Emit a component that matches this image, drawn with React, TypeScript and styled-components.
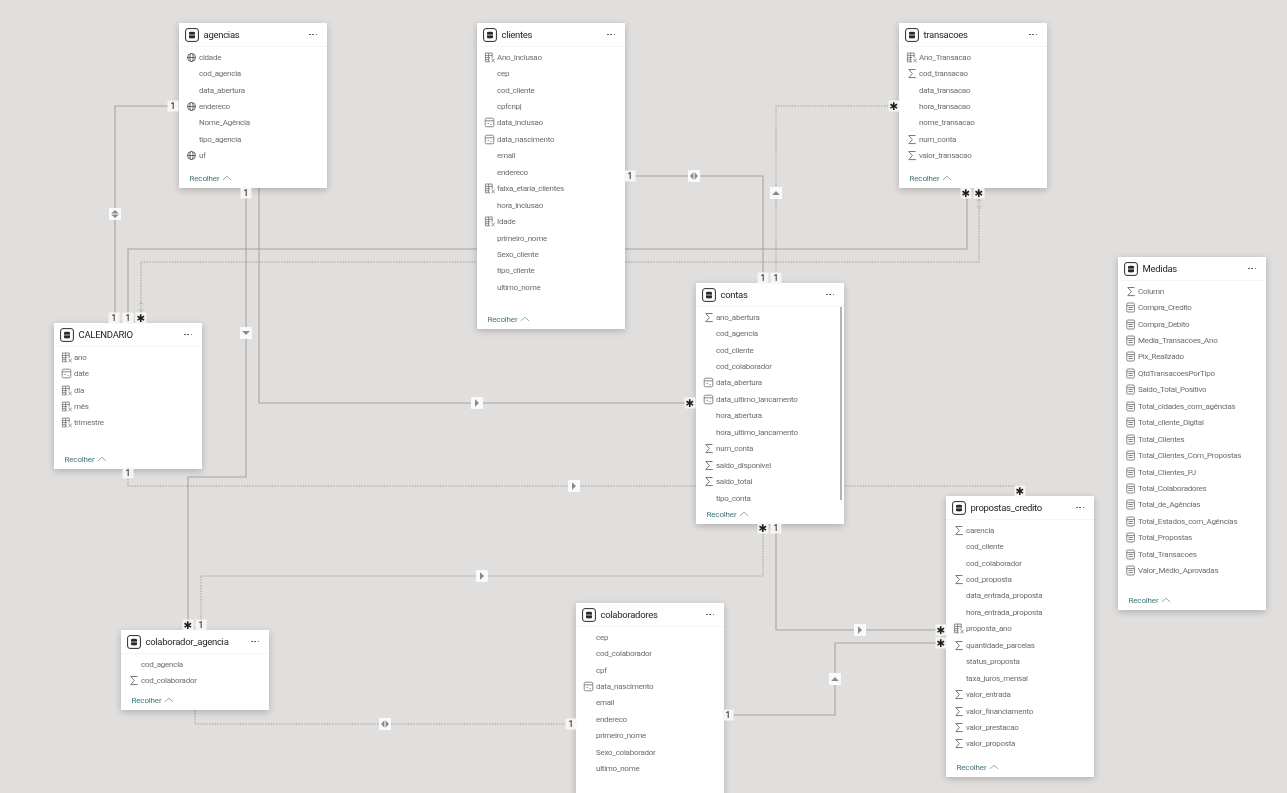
import React from 'react';
import styled, { createGlobalStyle } from 'styled-components';

const GlobalStyle = createGlobalStyle`
  html, body {
    margin: 0;
    padding: 0;
    width: 100%;
    height: 100%;
    overflow: hidden;
    background: #e0dfdd;
  }
`;

const Canvas = styled.div`
  position: relative;
  width: 1287px;
  height: 793px;
  overflow: hidden;
  background: #e0dfdd;
  font-family: Roboto, 'Noto Sans', 'Liberation Sans', sans-serif;
  filter: blur(0.25px);
`;

const Wires = styled.svg`
  position: absolute;
  left: 0;
  top: 0;
`;

const Card = styled.section<{ $x: number; $y: number; $h: number }>`
  position: absolute;
  left: ${(p) => p.$x}px;
  top: ${(p) => p.$y}px;
  width: 148px;
  height: ${(p) => p.$h}px;
  display: flex;
  flex-direction: column;
  box-sizing: border-box;
  background: #fff;
  box-shadow: 0 2px 7px rgba(0, 0, 0, 0.22);
`;

const CardHeader = styled.header`
  display: flex;
  align-items: center;
  flex: none;
  height: 23px;
  padding: 0 10px 0 6px;
  border-bottom: 1px solid #f5f4f3;
  color: #252423;
`;

const Title = styled.span`
  flex: 1;
  margin-left: 4.5px;
  font-size: 9.5px;
  letter-spacing: -0.28px;
  white-space: nowrap;
`;

const Dots = styled.span`
  display: flex;
  gap: 1.6px;
  span {
    width: 1.5px;
    height: 1.5px;
    border-radius: 50%;
    background: #4a4947;
  }
`;

const FieldList = styled.ul`
  flex: 1;
  list-style: none;
  margin: 0;
  padding: 2px 0 0;
  min-height: 0;
`;

const Field = styled.li`
  display: flex;
  align-items: center;
  height: 16.45px;
  padding-left: 6.5px;
  color: #6f6d6b;
  font-size: 8px;
  letter-spacing: -0.27px;
  white-space: nowrap;
`;

const IconSlot = styled.span`
  display: flex;
  align-items: center;
  justify-content: center;
  flex: none;
  width: 12px;
  height: 12px;
  margin-right: 1.5px;
`;

const CardFooter = styled.footer`
  display: flex;
  align-items: center;
  flex: none;
  height: 20px;
  padding-left: 10.5px;
  color: #3f7679;
  font-size: 8px;
  letter-spacing: -0.15px;
  svg {
    margin-left: 2px;
  }
`;

const Scrollbar = styled.div`
  position: absolute;
  right: 2px;
  top: 24px;
  width: 2.5px;
  height: 193px;
  background: #b4b3b2;
`;

const Marker = styled.div<{ $x: number; $y: number }>`
  position: absolute;
  left: ${(p) => p.$x}px;
  top: ${(p) => p.$y}px;
  width: 11px;
  height: 11px;
  transform: translate(-50%, -50%);
  display: flex;
  align-items: center;
  justify-content: center;
  background: #f6f5f4;
  color: #3a3938;
  font-size: 8.5px;
  font-weight: 500;
  line-height: 1;
`;

const Star = styled.span`
  font-family: 'DejaVu Sans', sans-serif;
  font-size: 10.5px;
  color: #1f1e1d;
`;

const ArrowBox = styled.div<{ $x: number; $y: number }>`
  position: absolute;
  left: ${(p) => p.$x}px;
  top: ${(p) => p.$y}px;
  width: 12px;
  height: 12px;
  transform: translate(-50%, -50%);
  display: flex;
  align-items: center;
  justify-content: center;
  background: #fbfafa;
`;

type IconKind = 'sigma' | 'globe' | 'cal' | 'calc' | 'measure';
type Row = [string, IconKind?];

const grey = '#7b7974';

function FieldIcon({ kind }: { kind: IconKind }) {
  if (kind === 'sigma') {
    return (
      <svg width="10" height="11" viewBox="0 0 10 11" fill="none" stroke="#6b6a68" strokeWidth="0.9">
        <path d="M8.5 1.5H1.8L5.4 5.6 1.8 9.6H8.8" />
      </svg>
    );
  }
  if (kind === 'globe') {
    return (
      <svg width="11" height="11" viewBox="0 0 11 11" fill="none" stroke="#55534f" strokeWidth="0.9">
        <circle cx="5.5" cy="5.5" r="4" />
        <ellipse cx="5.5" cy="5.5" rx="1.7" ry="4" />
        <path d="M1.5 5.5H9.5" />
      </svg>
    );
  }
  if (kind === 'cal') {
    return (
      <svg width="11" height="11" viewBox="0 0 11 11" fill="none" stroke={grey} strokeWidth="0.9">
        <rect x="1.2" y="1.2" width="8.6" height="8.6" rx="1.4" />
        <path d="M1.2 3.8H9.8M3.5 6.4H5M6.3 7.6H7.6" />
      </svg>
    );
  }
  if (kind === 'measure') {
    return (
      <svg width="11" height="11" viewBox="0 0 11 11" fill="none" stroke={grey} strokeWidth="0.9">
        <rect x="1.8" y="1" width="7.6" height="9" rx="1.2" />
        <path d="M1.8 3.6H9.4M3.4 5.5H7.8M3.4 7.5H7.8" />
      </svg>
    );
  }
  return (
    <svg width="12" height="11" viewBox="0 0 12 11" fill="none" stroke={grey} strokeWidth="0.85">
      <path d="M8.2 6V1H1.4V9.8H6" />
      <path d="M1.4 3.4H8.2M1.4 5.6H6M1.4 7.7H5.4M4.6 1V9.8" />
      <path d="M7.4 6.8L10.8 10.2M10.8 6.8L7.4 10.2" />
    </svg>
  );
}

function TableIcon() {
  return (
    <svg width="14" height="14" viewBox="0 0 14 14" fill="none">
      <rect x="0.6" y="0.6" width="12.8" height="12.8" rx="2.4" stroke="#2b2a29" strokeWidth="1" fill="#fff" />
      <path d="M4 4.6C4 3.4 10 3.4 10 4.6V9.6C10 10.8 4 10.8 4 9.6Z" fill="#2b2a29" />
      <path d="M4 7H10" stroke="#fff" strokeWidth="0.7" />
    </svg>
  );
}

function Chevron() {
  return (
    <svg width="10" height="6" viewBox="0 0 10 6" fill="none" stroke="#7f9394" strokeWidth="0.8">
      <path d="M0.8 5L5 1.2 9.2 5" />
    </svg>
  );
}

type TableData = { name: string; x: number; y: number; h: number; rows: Row[]; scroll?: boolean };

const plain = (...names: string[]): Row[] => names.map((n) => [n]);

const tables: TableData[] = [
  {
    name: 'agencias',
    x: 179,
    y: 23,
    h: 165,
    rows: [
      ['cidade', 'globe'],
      ['cod_agencia'],
      ['data_abertura'],
      ['endereco', 'globe'],
      ['Nome_Agência'],
      ['tipo_agencia'],
      ['uf', 'globe'],
    ],
  },
  {
    name: 'clientes',
    x: 477,
    y: 23,
    h: 306,
    rows: [
      ['Ano_Inclusao', 'calc'],
      ['cep'],
      ['cod_cliente'],
      ['cpfcnpj'],
      ['data_inclusao', 'cal'],
      ['data_nascimento', 'cal'],
      ['email'],
      ['endereco'],
      ['faixa_etaria_clientes', 'calc'],
      ['hora_inclusao'],
      ['Idade', 'calc'],
      ['primeiro_nome'],
      ['Sexo_cliente'],
      ['tipo_cliente'],
      ['ultimo_nome'],
    ],
  },
  {
    name: 'transacoes',
    x: 899,
    y: 23,
    h: 165,
    rows: [
      ['Ano_Transacao', 'calc'],
      ['cod_transacao', 'sigma'],
      ['data_transacao'],
      ['hora_transacao'],
      ['nome_transacao'],
      ['num_conta', 'sigma'],
      ['valor_transacao', 'sigma'],
    ],
  },
  {
    name: 'contas',
    x: 696,
    y: 283,
    h: 241,
    scroll: true,
    rows: [
      ['ano_abertura', 'sigma'],
      ['cod_agencia'],
      ['cod_cliente'],
      ['cod_colaborador'],
      ['data_abertura', 'cal'],
      ['data_ultimo_lancamento', 'cal'],
      ['hora_abertura'],
      ['hora_ultimo_lancamento'],
      ['num_conta', 'sigma'],
      ['saldo_disponivel', 'sigma'],
      ['saldo_total', 'sigma'],
      ['tipo_conta'],
    ],
  },
  {
    name: 'CALENDARIO',
    x: 54,
    y: 323,
    h: 146,
    rows: [
      ['ano', 'calc'],
      ['date', 'cal'],
      ['dia', 'calc'],
      ['mês', 'calc'],
      ['trimestre', 'calc'],
    ],
  },
  {
    name: 'colaborador_agencia',
    x: 121,
    y: 630,
    h: 80,
    rows: [['cod_agencia'], ['cod_colaborador', 'sigma']],
  },
  {
    name: 'colaboradores',
    x: 576,
    y: 603,
    h: 230,
    rows: [
      ['cep'],
      ['cod_colaborador'],
      ['cpf'],
      ['data_nascimento', 'cal'],
      ['email'],
      ['endereco'],
      ['primeiro_nome'],
      ['Sexo_colaborador'],
      ['ultimo_nome'],
    ],
  },
  {
    name: 'propostas_credito',
    x: 946,
    y: 496,
    h: 281,
    rows: [
      ['carencia', 'sigma'],
      ['cod_cliente'],
      ['cod_colaborador'],
      ['cod_proposta', 'sigma'],
      ['data_entrada_proposta'],
      ['hora_entrada_proposta'],
      ['proposta_ano', 'calc'],
      ['quantidade_parcelas', 'sigma'],
      ['status_proposta'],
      ['taxa_juros_mensal'],
      ['valor_entrada', 'sigma'],
      ['valor_financiamento', 'sigma'],
      ['valor_prestacao', 'sigma'],
      ['valor_proposta', 'sigma'],
    ],
  },
  {
    name: 'Medidas',
    x: 1118,
    y: 257,
    h: 353,
    rows: [
      ['Column', 'sigma'],
      ...plain(
        'Compra_Credito',
        'Compra_Debito',
        'Media_Transacoes_Ano',
        'Pix_Realizado',
        'QtdTransacoesPorTipo',
        'Saldo_Total_Positivo',
        'Total_cidades_com_agências',
        'Total_cliente_Digital',
        'Total_Clientes',
        'Total_Clientes_Com_Propostas',
        'Total_Clientes_PJ',
        'Total_Colaboradores',
        'Total_de_Agências',
        'Total_Estados_com_Agências',
        'Total_Propostas',
        'Total_Transacoes',
        'Valor_Médio_Aprovadas',
      ).map(([n]): Row => [n, 'measure']),
    ],
  },
];

const solidWires = [
  'M173 106H115V318',
  'M128 318V249H967V193',
  'M246 193V477H188V625',
  'M259 188V403H690',
  'M630 176H763V278',
  'M776 528V630H941',
  'M728 715H835V643H941',
];

const dottedWires = [
  'M141 318V262H979V193',
  'M128 473V486H1020V491',
  'M894 106H776V278',
  'M763 528V576H201V625',
  'M195 710V724H571',
];

const ones: [number, number][] = [
  [173, 106],
  [114, 318],
  [128, 318],
  [246, 193],
  [128, 473],
  [630, 176],
  [763, 278],
  [776, 278],
  [776, 528],
  [201, 625],
  [571, 724],
  [728, 715],
];

const stars: [number, number][] = [
  [141, 318],
  [966, 193],
  [979, 193],
  [894, 106],
  [690, 403],
  [1020, 491],
  [763, 528],
  [188, 625],
  [941, 630],
  [941, 643],
];

type ArrowDir = 'up' | 'down' | 'right' | 'both' | 'updown';

const arrows: [number, number, ArrowDir][] = [
  [115, 214, 'updown'],
  [246, 333, 'down'],
  [477, 403, 'right'],
  [574, 486, 'right'],
  [694, 176, 'both'],
  [776, 193, 'up'],
  [482, 576, 'right'],
  [860, 630, 'right'],
  [835, 679, 'up'],
  [385, 724, 'both'],
];

const arrowPaths: Record<ArrowDir, string> = {
  up: 'M1.2 7H8.8L5 3Z',
  down: 'M1.2 3H8.8L5 7Z',
  right: 'M3 1.2V8.8L7 5Z',
  both: 'M4.4 1.2V8.8L1 5ZM5.6 1.2V8.8L9 5Z',
  updown: 'M1.2 4.4H8.8L5 1ZM1.2 5.6H8.8L5 9Z',
};

function TableCard({ table }: { table: TableData }) {
  return (
    <Card $x={table.x} $y={table.y} $h={table.h}>
      <CardHeader>
        <TableIcon />
        <Title>{table.name}</Title>
        <Dots>
          <span />
          <span />
          <span />
        </Dots>
      </CardHeader>
      <FieldList>
        {table.rows.map(([label, kind]) => (
          <Field key={label}>
            <IconSlot>{kind && <FieldIcon kind={kind} />}</IconSlot>
            {label}
          </Field>
        ))}
      </FieldList>
      {table.name !== 'colaboradores' && (
        <CardFooter>
          Recolher
          <Chevron />
        </CardFooter>
      )}
      {table.scroll && <Scrollbar />}
    </Card>
  );
}

export default function App() {
  return (
    <Canvas>
      <GlobalStyle />
      <Wires width="1287" height="793" viewBox="0 0 1287 793" fill="none">
        {solidWires.map((d) => (
          <path key={d} d={d} stroke="#a6a5a3" strokeWidth="1.1" />
        ))}
        {dottedWires.map((d) => (
          <path key={d} d={d} stroke="#a3a2a0" strokeWidth="1" strokeDasharray="1.6 1.2" />
        ))}
        <path d="M138.5 304.5L141 302 143.5 304.5M138.5 309L141 311.5 143.5 309" stroke="#b3b2b0" strokeWidth="0.9" />
        <path d="M976.5 201.5L979 199 981.5 201.5M976.5 206L979 208.5 981.5 206" stroke="#b3b2b0" strokeWidth="0.9" />
      </Wires>
      {tables.map((t) => (
        <TableCard key={t.name} table={t} />
      ))}
      {ones.map(([x, y]) => (
        <Marker key={`${x}-${y}`} $x={x} $y={y}>
          1
        </Marker>
      ))}
      {stars.map(([x, y]) => (
        <Marker key={`${x}-${y}`} $x={x} $y={y}>
          <Star>✱</Star>
        </Marker>
      ))}
      {arrows.map(([x, y, dir]) => (
        <ArrowBox key={`${x}-${y}`} $x={x} $y={y}>
          <svg width="10" height="10" viewBox="0 0 10 10" fill="#8a8987">
            <path d={arrowPaths[dir]} />
          </svg>
        </ArrowBox>
      ))}
    </Canvas>
  );
}
